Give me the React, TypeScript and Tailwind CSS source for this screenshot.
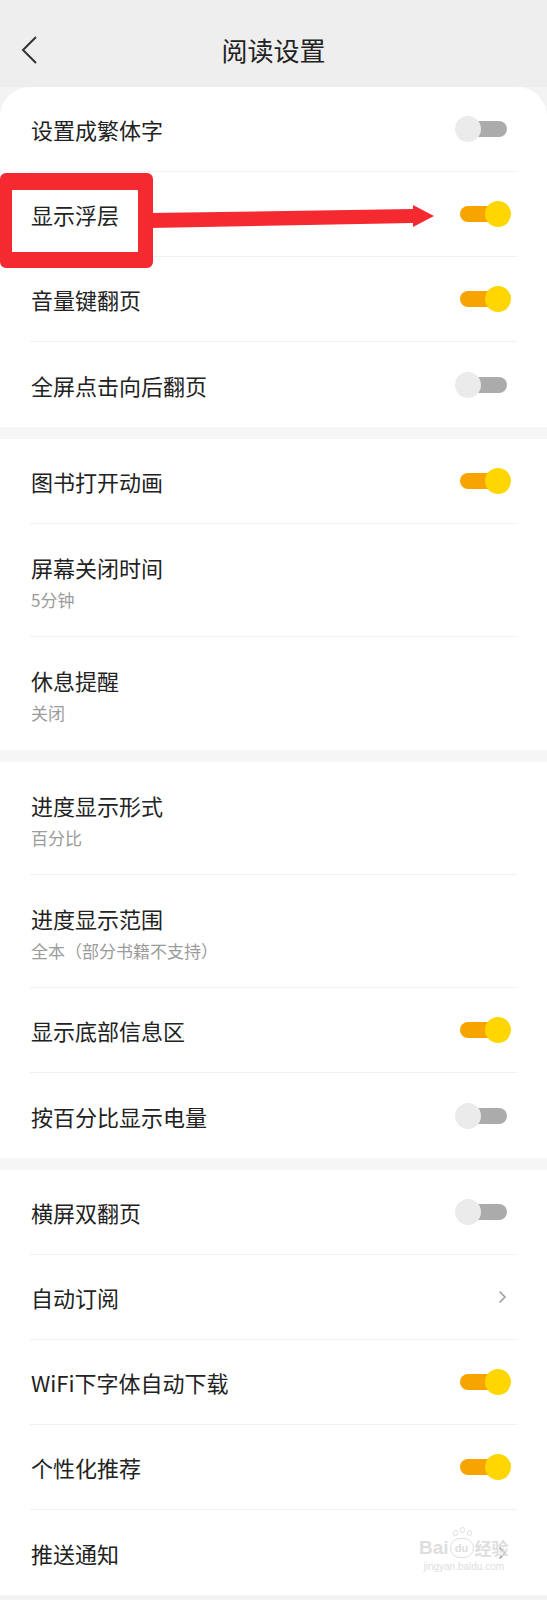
import type { ReactNode } from "react";

function Toggle({ on }: { on: boolean }) {
  return (
    <div className="relative h-[26px] w-[56px] shrink-0">
      <div
        className={`absolute left-[5px] top-[5px] h-[16px] w-[47px] rounded-full ${
          on ? "bg-[#f8a400]" : "bg-[#ababab]"
        }`}
      />
      <div
        className={`absolute top-0 h-[26px] w-[26px] rounded-full ${
          on ? "left-[30px] bg-[#ffd600]" : "left-0 bg-[#ebebeb]"
        }`}
      />
    </div>
  );
}

function Chevron() {
  return (
    <svg width="9" height="14" viewBox="0 0 9 14" className="mr-[4px] shrink-0">
      <path d="M1.5 1.5 L7 7 L1.5 12.5" fill="none" stroke="#9a9a9a" strokeWidth="1.5" />
    </svg>
  );
}

function Row({
  title,
  sub,
  right,
  last,
}: {
  title: string;
  sub?: string;
  right?: ReactNode;
  last?: boolean;
}) {
  return (
    <div
      className={`mx-[30px] flex justify-between pl-[1px] pr-[6px] ${
        sub ? "h-[113px] items-start pt-[28px]" : "h-[85px] items-center"
      } ${last ? "" : "border-b border-[#f1f1f1]"}`}
    >
      <div className="flex flex-col">
        <span className="text-[22px] leading-[30px] text-[#222]">{title}</span>
        {sub && <span className="mt-[6px] text-[17px] leading-[24px] text-[#9b9b9b]">{sub}</span>}
      </div>
      {right}
    </div>
  );
}

function Gap() {
  return <div className="h-[12px] bg-[#f6f6f6]" />;
}

export default function App() {
  return (
    <div className="relative min-h-[1600px] bg-[#f3f3f3] font-['Noto_Sans_CJK_SC','Noto_Sans',sans-serif]">
      <header className="grid h-[87px] grid-cols-[1fr_auto_1fr] items-center bg-[#eeeeee] pt-[13px]">
        <div className="pl-[21px]">
          <svg width="16" height="28" viewBox="0 0 16 28">
            <path d="M15 1 L2 14 L15 27" fill="none" stroke="#333" strokeWidth="2" />
          </svg>
        </div>
        <h1 className="text-[26px] leading-[36px] text-[#222]">阅读设置</h1>
        <div />
      </header>

      <main className="overflow-hidden rounded-t-[30px] bg-white">
        <section>
          <Row title="设置成繁体字" right={<Toggle on={false} />} />
          <Row title="显示浮层" right={<Toggle on />} />
          <Row title="音量键翻页" right={<Toggle on />} />
          <Row title="全屏点击向后翻页" right={<Toggle on={false} />} last />
        </section>
        <Gap />
        <section>
          <Row title="图书打开动画" right={<Toggle on />} />
          <Row title="屏幕关闭时间" sub="5分钟" />
          <Row title="休息提醒" sub="关闭" last />
        </section>
        <Gap />
        <section>
          <Row title="进度显示形式" sub="百分比" />
          <Row title="进度显示范围" sub="全本（部分书籍不支持）" />
          <Row title="显示底部信息区" right={<Toggle on />} />
          <Row title="按百分比显示电量" right={<Toggle on={false} />} last />
        </section>
        <Gap />
        <section>
          <Row title="横屏双翻页" right={<Toggle on={false} />} />
          <Row title="自动订阅" right={<Chevron />} />
          <Row title="WiFi下字体自动下载" right={<Toggle on />} />
          <Row title="个性化推荐" right={<Toggle on />} />
          <Row title="推送通知" right={<Chevron />} last />
        </section>
      </main>

      {/* red annotation drawn over the screenshot */}
      <div className="pointer-events-none absolute left-0 top-[173px] h-[95px] w-[153px] rounded-[6px] border-b-[16px] border-l-[12px] border-r-[15px] border-t-[17px] border-[#f52a31]" />
      <svg
        className="pointer-events-none absolute left-[150px] top-[200px]"
        width="290"
        height="35"
        viewBox="0 0 290 35"
      >
        <polygon
          points="0,13 263,9 263,5 284,16 263,27 263,23 0,28"
          fill="#f52a31"
        />
      </svg>

      {/* watermark */}
      <div className="pointer-events-none absolute left-[419px] top-[1538px] flex flex-col items-center text-[#dedede]">
        <div className="flex items-end gap-[1px] font-['Liberation_Sans',sans-serif] text-[19px] font-bold leading-[20px]">
          <span>Bai</span>
          <span className="relative flex h-[20px] w-[24px] items-center justify-center rounded-full border border-[#dedede] text-[11px] leading-none">
            du
            <span className="absolute -top-[9px] left-[2px] h-[6px] w-[5px] rounded-full border border-[#dedede]" />
            <span className="absolute -top-[12px] left-[9px] h-[6px] w-[5px] rounded-full border border-[#dedede]" />
            <span className="absolute -top-[9px] left-[16px] h-[6px] w-[5px] rounded-full border border-[#dedede]" />
          </span>
          <span className="font-['Noto_Sans_CJK_SC',sans-serif] text-[17px]">经验</span>
        </div>
        <span className="mt-[3px] font-['Liberation_Sans',sans-serif] text-[10px] leading-[12px]">
          jingyan.baidu.com
        </span>
      </div>
    </div>
  );
}
